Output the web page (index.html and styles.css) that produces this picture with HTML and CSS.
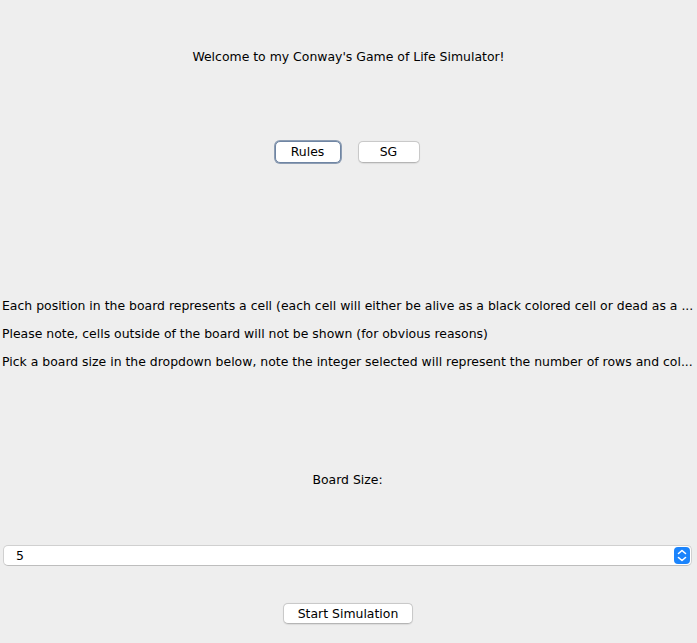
FILE: index.html
```html
<!DOCTYPE html>
<html>
<head>
<meta charset="utf-8">
<link rel="stylesheet" href="styles.css">
</head>
<body>
<div class="app">
  <div class="title">Welcome to my Conway's Game of Life Simulator!</div>
  <div class="tabs">
    <button class="btn btn-rules focused">Rules</button>
    <button class="btn btn-sg">SG</button>
  </div>
  <div class="info">
    <p>Each position in the board represents a cell (each cell will either be alive as a black colored cell or dead as a ...</p>
    <p>Please note, cells outside of the board will not be shown (for obvious reasons)</p>
    <p>Pick a board size in the dropdown below, note the integer selected will represent the number of rows and col...</p>
  </div>
  <div class="label">Board Size:</div>
  <div class="combo">
    <span class="combo-value">5</span>
    <span class="combo-arrow">
      <svg width="16" height="17" viewBox="0 0 16 17">
        <path d="M4.5 6.5 L8 3.5 L11.5 6.5" fill="none" stroke="#fff" stroke-width="1.6" stroke-linecap="round" stroke-linejoin="round"/>
        <path d="M4.5 10.5 L8 13.5 L11.5 10.5" fill="none" stroke="#fff" stroke-width="1.6" stroke-linecap="round" stroke-linejoin="round"/>
      </svg>
    </span>
  </div>
  <div class="start">
    <button class="btn btn-start">Start Simulation</button>
  </div>
</div>
</body>
</html>
```
FILE: styles.css
```css
html, body {
  margin: 0;
  padding: 0;
  background: #eeeeee;
}
body {
  font-family: "DejaVu Sans", "Liberation Sans", sans-serif;
  font-size: 12.45px;
  color: #000000;
  width: 697px;
  height: 643px;
  overflow: hidden;
}
.app {
  display: flex;
  flex-direction: column;
}
.title {
  margin-top: 49px;
  height: 16px;
  line-height: 16px;
  text-align: center;
}
.tabs {
  margin-top: 76px;
  display: flex;
  justify-content: center;
  gap: 17px;
  padding-right: 3px;
}
.btn {
  font-family: inherit;
  font-size: 12.45px;
  color: #000000;
  background: #ffffff;
  border: 1px solid #c9c9c9;
  border-bottom-color: #b5b5b5;
  border-radius: 5px;
  height: 22px;
  padding: 0;
  line-height: 20px;
  box-shadow: 0 0.5px 1px rgba(0,0,0,0.08);
}
.btn-rules {
  width: 66px;
}
.btn-sg {
  width: 62px;
}
.focused {
  border: 1px solid #6f85a3;
  box-shadow: 0 0 0 1px #8d9db3;
}
.info {
  margin-top: 129px;
  padding-left: 2px;
}
.info p {
  margin: 0;
  height: 28px;
  line-height: 28px;
  white-space: nowrap;
  overflow: hidden;
}
.label {
  margin-top: 96px;
  height: 16px;
  line-height: 16px;
  text-align: center;
  padding-right: 2px;
}
.combo {
  margin: 57px 5px 0 3px;
  height: 21px;
  background: #ffffff;
  border: 1px solid #d0d0d0;
  border-bottom-color: #bdbdbd;
  border-radius: 5px;
  box-sizing: border-box;
  display: flex;
  align-items: center;
  justify-content: space-between;
  padding-left: 12px;
  padding-right: 1px;
}
.combo-value {
  line-height: 16px;
}
.combo-arrow {
  display: flex;
  width: 16px;
  height: 17px;
  background: #1b84fc;
  border-radius: 4px;
}
.start {
  margin-top: 37px;
  display: flex;
  justify-content: center;
  padding-right: 1px;
}
.btn-start {
  width: 130px;
  height: 21px;
  line-height: 19px;
}
```
